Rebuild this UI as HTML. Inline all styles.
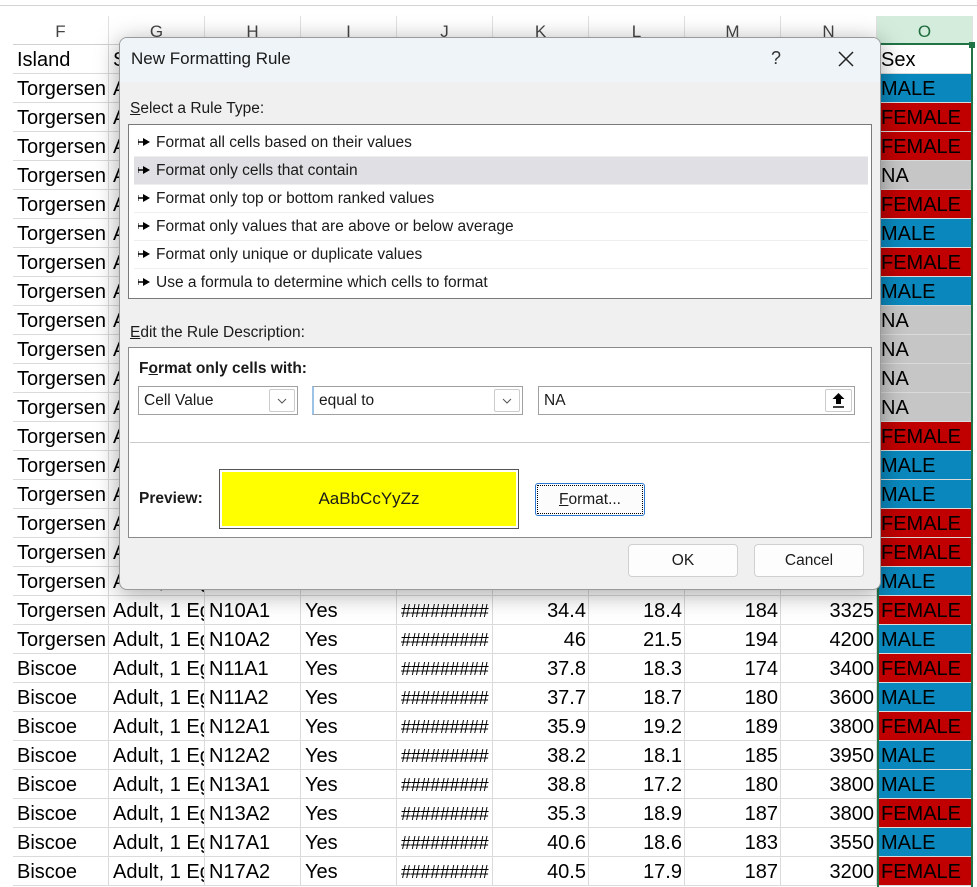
<!DOCTYPE html>
<html><head><meta charset="utf-8"><style>
*{box-sizing:border-box;margin:0;padding:0}
body{width:977px;height:887px;overflow:hidden;background:#fff;font-family:"Liberation Sans",sans-serif;position:relative}
.topline{position:absolute;left:0;top:0;width:977px;height:6px;background:#fff;border-bottom:1px solid #d4d4d4}
.colh{position:absolute;top:16px;height:29px;border-right:1px solid #e1e1e1;border-bottom:1px solid #d0d0d0;font-size:17px;color:#444;text-align:center;line-height:32px;background:#fff}
table{position:absolute;left:13px;top:45px;border-collapse:separate;border-spacing:0;table-layout:fixed;width:960px;font-size:20px}
td{height:29px;border-right:1px solid #dadada;border-bottom:1px solid #dadada;white-space:nowrap;overflow:hidden;padding:3px 3px 0 4px;line-height:25px;color:#000}
td.r{text-align:right;padding-right:2px}
td.h{font-size:18px;letter-spacing:-0.3px}
td.m{background:#0a88bd}
td.f{background:#c00000}
td.n{background:#c6c6c6}
td.s{background:#fff}
.dlg{position:absolute;left:119px;top:37px;width:762px;height:553px;background:#f0f0f0;border:1px solid #9a9a9a;border-radius:8px;box-shadow:0 4px 24px rgba(0,0,0,.35);overflow:hidden;font-size:15.5px;color:#1a1a1a}
.tb{position:absolute;left:0;top:0;width:100%;height:44px;background:#eef4f8}
.ab{position:absolute}
.list{position:absolute;left:8px;top:86px;width:744px;height:175px;background:#fff;border:1px solid #7a7a7a}
.item{position:absolute;left:5px;width:734px;height:28px;line-height:28px;padding-left:4px;border-bottom:1px solid #eee}
.item svg{vertical-align:middle;margin-right:6px;margin-top:-2px}
.panel{position:absolute;left:8px;top:309px;width:744px;height:191px;background:#fff;border:1px solid #8a8a8a}
.dd{position:absolute;top:38px;height:29px;border:1px solid #a0a0a0;background:#fff;line-height:27px;padding-left:5px}
.arr{position:absolute;right:2px;top:2px;width:26px;height:23px;border:1px solid #ccc;border-radius:2px;background:#fff}
.btn{position:absolute;background:#fdfdfd;border:1px solid #d0d0d0;border-radius:4px;text-align:center}
</style></head><body>
<div class="topline"></div>
<div class="colh" style="left:13px;width:96px">F</div>
<div class="colh" style="left:109px;width:96px">G</div>
<div class="colh" style="left:205px;width:96px">H</div>
<div class="colh" style="left:301px;width:96px">I</div>
<div class="colh" style="left:397px;width:96px">J</div>
<div class="colh" style="left:493px;width:96px">K</div>
<div class="colh" style="left:589px;width:96px">L</div>
<div class="colh" style="left:685px;width:96px">M</div>
<div class="colh" style="left:781px;width:96px">N</div>
<div class="colh" style="left:877px;width:96px;background:#d3ecdb;color:#1e6b3e;border-bottom:2px solid #217346">O</div>
<table>
<colgroup><col style="width:96px"><col style="width:96px"><col style="width:96px"><col style="width:96px"><col style="width:96px"><col style="width:96px"><col style="width:96px"><col style="width:96px"><col style="width:96px"><col style="width:96px"></colgroup>
<tr><td>Island</td><td>Study Name</td><td></td><td></td><td></td><td></td><td></td><td></td><td></td><td class="s">Sex</td></tr>
<tr><td>Torgersen</td><td>Adult, 1 Egg</td><td></td><td></td><td></td><td></td><td></td><td></td><td></td><td class="m">MALE</td></tr>
<tr><td>Torgersen</td><td>Adult, 1 Egg</td><td></td><td></td><td></td><td></td><td></td><td></td><td></td><td class="f">FEMALE</td></tr>
<tr><td>Torgersen</td><td>Adult, 1 Egg</td><td></td><td></td><td></td><td></td><td></td><td></td><td></td><td class="f">FEMALE</td></tr>
<tr><td>Torgersen</td><td>Adult, 1 Egg</td><td></td><td></td><td></td><td></td><td></td><td></td><td></td><td class="n">NA</td></tr>
<tr><td>Torgersen</td><td>Adult, 1 Egg</td><td></td><td></td><td></td><td></td><td></td><td></td><td></td><td class="f">FEMALE</td></tr>
<tr><td>Torgersen</td><td>Adult, 1 Egg</td><td></td><td></td><td></td><td></td><td></td><td></td><td></td><td class="m">MALE</td></tr>
<tr><td>Torgersen</td><td>Adult, 1 Egg</td><td></td><td></td><td></td><td></td><td></td><td></td><td></td><td class="f">FEMALE</td></tr>
<tr><td>Torgersen</td><td>Adult, 1 Egg</td><td></td><td></td><td></td><td></td><td></td><td></td><td></td><td class="m">MALE</td></tr>
<tr><td>Torgersen</td><td>Adult, 1 Egg</td><td></td><td></td><td></td><td></td><td></td><td></td><td></td><td class="n">NA</td></tr>
<tr><td>Torgersen</td><td>Adult, 1 Egg</td><td></td><td></td><td></td><td></td><td></td><td></td><td></td><td class="n">NA</td></tr>
<tr><td>Torgersen</td><td>Adult, 1 Egg</td><td></td><td></td><td></td><td></td><td></td><td></td><td></td><td class="n">NA</td></tr>
<tr><td>Torgersen</td><td>Adult, 1 Egg</td><td></td><td></td><td></td><td></td><td></td><td></td><td></td><td class="n">NA</td></tr>
<tr><td>Torgersen</td><td>Adult, 1 Egg</td><td></td><td></td><td></td><td></td><td></td><td></td><td></td><td class="f">FEMALE</td></tr>
<tr><td>Torgersen</td><td>Adult, 1 Egg</td><td></td><td></td><td></td><td></td><td></td><td></td><td></td><td class="m">MALE</td></tr>
<tr><td>Torgersen</td><td>Adult, 1 Egg</td><td></td><td></td><td></td><td></td><td></td><td></td><td></td><td class="m">MALE</td></tr>
<tr><td>Torgersen</td><td>Adult, 1 Egg</td><td></td><td></td><td></td><td></td><td></td><td></td><td></td><td class="f">FEMALE</td></tr>
<tr><td>Torgersen</td><td>Adult, 1 Egg</td><td></td><td></td><td></td><td></td><td></td><td></td><td></td><td class="f">FEMALE</td></tr>
<tr><td>Torgersen</td><td>Adult, 1 Egg</td><td></td><td></td><td></td><td></td><td></td><td></td><td></td><td class="m">MALE</td></tr>
<tr><td>Torgersen</td><td>Adult, 1 Egg</td><td>N10A1</td><td>Yes</td><td class="h">#########</td><td class="r">34.4</td><td class="r">18.4</td><td class="r">184</td><td class="r">3325</td><td class="f">FEMALE</td></tr>
<tr><td>Torgersen</td><td>Adult, 1 Egg</td><td>N10A2</td><td>Yes</td><td class="h">#########</td><td class="r">46</td><td class="r">21.5</td><td class="r">194</td><td class="r">4200</td><td class="m">MALE</td></tr>
<tr><td>Biscoe</td><td>Adult, 1 Egg</td><td>N11A1</td><td>Yes</td><td class="h">#########</td><td class="r">37.8</td><td class="r">18.3</td><td class="r">174</td><td class="r">3400</td><td class="f">FEMALE</td></tr>
<tr><td>Biscoe</td><td>Adult, 1 Egg</td><td>N11A2</td><td>Yes</td><td class="h">#########</td><td class="r">37.7</td><td class="r">18.7</td><td class="r">180</td><td class="r">3600</td><td class="m">MALE</td></tr>
<tr><td>Biscoe</td><td>Adult, 1 Egg</td><td>N12A1</td><td>Yes</td><td class="h">#########</td><td class="r">35.9</td><td class="r">19.2</td><td class="r">189</td><td class="r">3800</td><td class="f">FEMALE</td></tr>
<tr><td>Biscoe</td><td>Adult, 1 Egg</td><td>N12A2</td><td>Yes</td><td class="h">#########</td><td class="r">38.2</td><td class="r">18.1</td><td class="r">185</td><td class="r">3950</td><td class="m">MALE</td></tr>
<tr><td>Biscoe</td><td>Adult, 1 Egg</td><td>N13A1</td><td>Yes</td><td class="h">#########</td><td class="r">38.8</td><td class="r">17.2</td><td class="r">180</td><td class="r">3800</td><td class="m">MALE</td></tr>
<tr><td>Biscoe</td><td>Adult, 1 Egg</td><td>N13A2</td><td>Yes</td><td class="h">#########</td><td class="r">35.3</td><td class="r">18.9</td><td class="r">187</td><td class="r">3800</td><td class="f">FEMALE</td></tr>
<tr><td>Biscoe</td><td>Adult, 1 Egg</td><td>N17A1</td><td>Yes</td><td class="h">#########</td><td class="r">40.6</td><td class="r">18.6</td><td class="r">183</td><td class="r">3550</td><td class="m">MALE</td></tr>
<tr><td>Biscoe</td><td>Adult, 1 Egg</td><td>N17A2</td><td>Yes</td><td class="h">#########</td><td class="r">40.5</td><td class="r">17.9</td><td class="r">187</td><td class="r">3200</td><td class="f">FEMALE</td></tr>
</table>
<div class="ab" style="left:877px;top:44px;width:2px;height:843px;background:#217346"></div>
<div class="ab" style="left:971px;top:44px;width:2px;height:843px;background:#217346"></div>
<div class="ab" style="left:969px;top:42px;width:6px;height:6px;background:#217346"></div>

<div class="dlg">
 <div class="tb"></div>
 <div class="ab" style="left:11px;top:11px;font-size:17px">New Formatting Rule</div>
 <div class="ab" style="left:651px;top:10px;font-size:18px;color:#333">?</div>
 <svg class="ab" style="left:717px;top:12px" width="18" height="18"><path d="M2 2L16 16M16 2L2 16" stroke="#222" stroke-width="1.5"/></svg>
 <div class="ab" style="left:10px;top:62px"><u>S</u>elect a Rule Type:</div>
 <div class="list">
  <div class="item" style="top:4px"><svg width="12" height="8"><path d="M0 4h6" stroke="#000" stroke-width="1.5"/><path d="M5 0l7 4-7 4z"/><path d="M0 1v6" stroke="#000"/></svg>Format all cells based on their values</div>
  <div class="item" style="top:32px;background:#e0e0e4"><svg width="12" height="8"><path d="M0 4h6" stroke="#000" stroke-width="1.5"/><path d="M5 0l7 4-7 4z"/><path d="M0 1v6" stroke="#000"/></svg>Format only cells that contain</div>
  <div class="item" style="top:60px"><svg width="12" height="8"><path d="M0 4h6" stroke="#000" stroke-width="1.5"/><path d="M5 0l7 4-7 4z"/><path d="M0 1v6" stroke="#000"/></svg>Format only top or bottom ranked values</div>
  <div class="item" style="top:88px"><svg width="12" height="8"><path d="M0 4h6" stroke="#000" stroke-width="1.5"/><path d="M5 0l7 4-7 4z"/><path d="M0 1v6" stroke="#000"/></svg>Format only values that are above or below average</div>
  <div class="item" style="top:116px"><svg width="12" height="8"><path d="M0 4h6" stroke="#000" stroke-width="1.5"/><path d="M5 0l7 4-7 4z"/><path d="M0 1v6" stroke="#000"/></svg>Format only unique or duplicate values</div>
  <div class="item" style="top:144px;border:none"><svg width="12" height="8"><path d="M0 4h6" stroke="#000" stroke-width="1.5"/><path d="M5 0l7 4-7 4z"/><path d="M0 1v6" stroke="#000"/></svg>Use a formula to determine which cells to format</div>
 </div>
 <div class="ab" style="left:10px;top:286px"><u>E</u>dit the Rule Description:</div>
 <div class="panel">
  <div class="ab" style="left:10px;top:12px;font-weight:bold">F<u>o</u>rmat only cells with:</div>
  <div class="dd" style="left:9px;width:160px">Cell Value<div class="arr"><svg width="24" height="21"><path d="M8 9l4 4 4-4" fill="none" stroke="#555"/></svg></div></div>
  <div class="dd" style="left:183px;width:211px;border-left:2px solid #9cc3e6">equal to<div class="arr"><svg width="24" height="21"><path d="M8 9l4 4 4-4" fill="none" stroke="#555"/></svg></div></div>
  <div class="dd" style="left:409px;width:317px">NA<div class="arr" style="width:27px"><svg width="25" height="21"><path d="M12.5 3l6 6h-3.5v5h-5v-5h-3.5z" fill="#000"/><path d="M7 17h11" stroke="#000" stroke-width="1.5"/></svg></div></div>
  <div class="ab" style="left:1px;top:94px;width:740px;height:1px;background:#ccc"></div>
  <div class="ab" style="left:10px;top:142px;font-weight:bold">Preview:</div>
  <div class="ab" style="left:90px;top:121px;width:300px;height:60px;border:1px solid #555;padding:2px"><div style="width:100%;height:100%;background:#ffff00;text-align:center;line-height:53px;font-size:17px">AaBbCcYyZz</div></div>
  <div class="ab" style="left:406px;top:135px;width:110px;height:33px;border:1px solid #2b78d0;border-radius:3px;background:#fcfcfc;padding:1px"><div style="border:1px dotted #000;height:100%;text-align:center;line-height:28px"><u>F</u>ormat...</div></div>
 </div>
 <div class="btn" style="left:508px;top:506px;width:110px;height:33px;line-height:31px">OK</div>
 <div class="btn" style="left:634px;top:506px;width:110px;height:33px;line-height:31px">Cancel</div>
</div>
</body></html>
